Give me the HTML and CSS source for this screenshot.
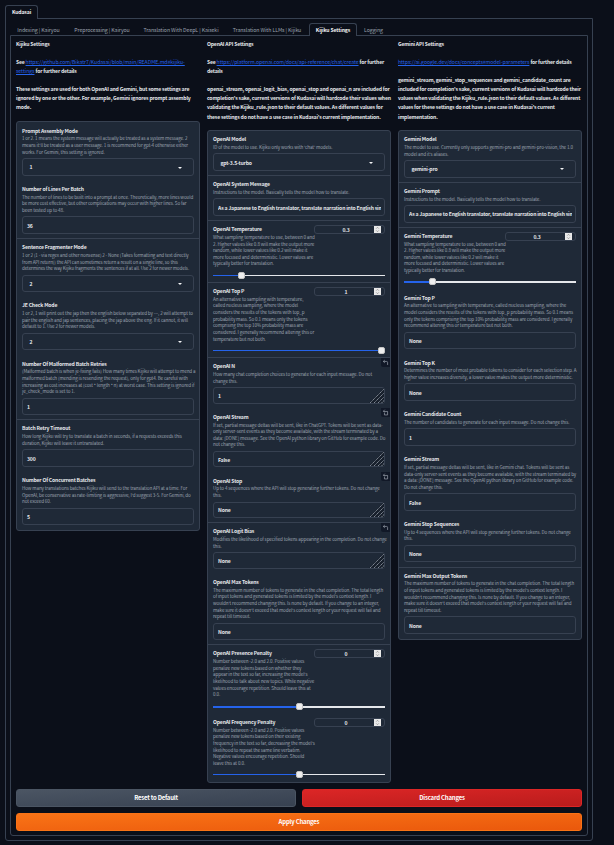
FILE: index.html
```html
<!DOCTYPE html>
<html lang="en">
<head>
<meta charset="utf-8">
<title>Kudasai</title>
<link rel="stylesheet" href="styles.css">
</head>
<body>
<svg width="0" height="0" class="defs">
  <symbol id="undo" viewBox="0 0 10 10"><path d="M4 1.5 1.8 3.5 4 5.5M2 3.5h4.500q1.500 0 1.500 1.500v3.500" fill="none" stroke="currentColor" stroke-width="1"/></symbol>
  <symbol id="undo-box" viewBox="0 0 10 10"><path d="M4 1 2 3 4 5M2 3.500h6v5h-4.500v-3" fill="none" stroke="currentColor" stroke-width="1"/></symbol>
  <symbol id="grip" viewBox="0 0 15 15"><path d="M0 15 15 0V15Z" fill="#18202c"/><path d="M1 15 15 1M5 15 15 5M9 15 15 9M12.500 15 15 12.500" fill="none" stroke="currentColor" stroke-width=".8" stroke-dasharray="1.600 .4"/></symbol>
  <symbol id="spin" viewBox="0 0 7 8"><path d="M2 3 3.500 1.500 5 3M2 5 3.500 6.500 5 5" fill="none" stroke="#777" stroke-width=".7"/></symbol>
</svg>
<nav class="top-tabs"><span class="tab active">Kudasai</span></nav>
<main class="outer">
  <nav class="tabs">
    <span class="tab t1">Indexing | Kairyou</span>
    <span class="tab t2">Preprocessing | Kairyou</span>
    <span class="tab t3">Translation With DeepL | Kaiseki</span>
    <span class="tab t4">Translation With LLMs | Kijiku</span>
    <span class="tab active t5">Kijiku Settings</span>
    <span class="tab t6">Logging</span>
  </nav>
  <section class="inner">
    <div class="columns">
      <div class="col">
        <div class="intro short">Kijiku Settings<br><br>See <a>https://github.com/Bikatr7/Kudasai/blob/main/README.md#kijiku-<br>settings</a> for further details<br><br>These settings are used for both OpenAI and Gemini, but some settings are<br>ignored by one or the other. For example, Gemini ignores prompt assembly<br>mode.</div>
        <div class="panel">
          <div class="field"><label>Prompt Assembly Mode</label><p>1 or 2. 1 means the system message will actually be treated as a system message. 2<br>means it'll be treated as a user message. 1 is recommend for gpt-4 otherwise either<br>works. For Gemini, this setting is ignored.</p><div class="box select">1</div></div>
          <div class="field"><label>Number of Lines Per Batch</label><p>The number of lines to be built into a prompt at once. Theoretically, more lines would<br>be more cost effective, but other complications may occur with higher lines. So far<br>been tested up to 48.</p><div class="box">36</div></div>
          <div class="field ruled"><label>Sentence Fragmenter Mode</label><p>1 or 2 (1 - via regex and other nonsense) 2 - None (Takes formatting and text directly<br>from API return)) the API can sometimes return a result on a single line, so this<br>determines the way Kijiku fragments the sentences if at all. Use 2 for newer models.</p><div class="box select">2</div></div>
          <div class="field"><label>JE Check Mode</label><p>1 or 2, 1 will print out the jap then the english below separated by ---, 2 will attempt to<br>pair the english and jap sentences, placing the jap above the eng. If it cannot, it will<br>default to 1. Use 2 for newer models.</p><div class="box select">2</div></div>
          <div class="field"><label>Number Of Malformed Batch Retries</label><p>(Malformed batch is when je-fixing fails) How many times Kijiku will attempt to mend a<br>malformed batch (mending is resending the request), only for gpt4. Be careful with<br>increasing as cost increases at (cost * length * n) at worst case. This setting is ignored if<br>je_check_mode is set to 1.</p><div class="box">1</div></div>
          <div class="field ruled"><label>Batch Retry Timeout</label><p>How long Kijiku will try to translate a batch in seconds, if a requests exceeds this<br>duration, Kijiku will leave it untranslated.</p><div class="box">300</div></div>
          <div class="field"><label>Number Of Concurrent Batches</label><p>How many translations batches Kijiku will send to the translation API at a time. For<br>OpenAI, be conservative as rate-limiting is aggressive, I'd suggest 3-5. For Gemini, do<br>not exceed 60.</p><div class="box">5</div></div>
        </div>
      </div>
      <div class="col">
        <div class="intro">OpenAI API Settings<br><br>See <a>https://platform.openai.com/docs/api-reference/chat/create</a> for further<br>details<br><br>openai_stream, openai_logit_bias, openai_stop and openai_n are included for<br>completion's sake, current versions of Kudasai will hardcode their values when<br>validating the Kijiku_rule.json to their default values. As different values for<br><span class="last">these settings do not have a use case in Kudasai's current implementation.</span></div>
        <div class="panel">
          <div class="field"><label>OpenAI Model</label><p>ID of the model to use. Kijiku only works with 'chat' models.</p><div class="box select">gpt-3.5-turbo</div></div>
          <div class="field ruled"><label>OpenAI System Message</label><p>Instructions to the model. Basically tells the model how to translate.</p><div class="box"><span class="clip">As a Japanese to English translator, translate narration into English sim</span></div></div>
          <div class="field ruled range"><div class="num">0.3<svg><use href="#spin"/></svg></div><label>OpenAI Temperature</label><p>What sampling temperature to use, between 0 and<br>2. Higher values like 0.8 will make the output more<br>random, while lower values like 0.2 will make it<br>more focused and deterministic. Lower values are<br>typically better for translation.</p><div class="slider p15"><i></i></div></div>
          <div class="field ruled range"><div class="num">1<svg><use href="#spin"/></svg></div><label>OpenAI Top P</label><p>An alternative to sampling with temperature,<br>called nucleus sampling, where the model<br>considers the results of the tokens with top_p<br>probability mass. So 0.1 means only the tokens<br>comprising the top 10% probability mass are<br>considered. I generally recommend altering this or<br>temperature but not both.</p><div class="slider p100"><i></i></div></div>
          <div class="field ruled area"><svg class="reset"><use href="#undo"/></svg><label>OpenAI N</label><p>How many chat completion choices to generate for each input message. Do not<br>change this.</p><div class="box">1<svg class="grip"><use href="#grip"/></svg></div></div>
          <div class="field area"><svg class="reset"><use href="#undo-box"/></svg><label>OpenAI Stream</label><p>If set, partial message deltas will be sent, like in ChatGPT. Tokens will be sent as data-<br>only server-sent events as they become available, with the stream terminated by a<br>data: [DONE] message. See the OpenAI python library on GitHub for example code. Do<br>not change this.</p><div class="box">False<svg class="grip"><use href="#grip"/></svg></div></div>
          <div class="field area"><svg class="reset"><use href="#undo-box"/></svg><label>OpenAI Stop</label><p>Up to 4 sequences where the API will stop generating further tokens. Do not change<br>this.</p><div class="box">None<svg class="grip"><use href="#grip"/></svg></div></div>
          <div class="field ruled area"><svg class="reset"><use href="#undo"/></svg><label>OpenAI Logit Bias</label><p>Modifies the likelihood of specified tokens appearing in the completion. Do not change<br>this.</p><div class="box">None<svg class="grip"><use href="#grip"/></svg></div></div>
          <div class="field"><label>OpenAI Max Tokens</label><p>The maximum number of tokens to generate in the chat completion. The total length<br>of input tokens and generated tokens is limited by the model's context length. I<br>wouldn't recommend changing this. Is none by default. If you change to an integer,<br>make sure it doesn't exceed that model's context length or your request will fail and<br>repeat till timeout.</p><div class="box">None</div></div>
          <div class="field ruled range"><div class="num">0<svg><use href="#spin"/></svg></div><label>OpenAI Presence Penalty</label><p>Number between -2.0 and 2.0. Positive values<br>penalize new tokens based on whether they<br>appear in the text so far, increasing the model's<br>likelihood to talk about new topics. While negative<br>values encourage repetition. Should leave this at<br>0.0.</p><div class="slider p50 thick"><i></i></div></div>
          <div class="field range"><div class="num">0<svg><use href="#spin"/></svg></div><label>OpenAI Frequency Penalty</label><p>Number between -2.0 and 2.0. Positive values<br>penalize new tokens based on their existing<br>frequency in the text so far, decreasing the model's<br>likelihood to repeat the same line verbatim.<br>Negative values encourage repetition. Should<br>leave this at 0.0.</p><div class="slider p50"><i></i></div></div>
        </div>
      </div>
      <div class="col">
        <div class="intro">Gemini API Settings<br><br><a>https://ai.google.dev/docs/concepts#model-parameters</a> for further details<br><br>gemini_stream, gemini_stop_sequences and gemini_candidate_count are<br>included for completion's sake, current versions of Kudasai will hardcode their<br>values when validating the Kijiku_rule.json to their default values. As different<br>values for these settings do not have a use case in Kudasai's current<br><span class="last">implementation.</span></div>
        <div class="panel">
          <div class="field"><label>Gemini Model</label><p>The model to use. Currently only supports gemini-pro and gemini-pro-vision, the 1.0<br>model and it's aliases.</p><div class="box select">gemini-pro</div></div>
          <div class="field ruled"><label>Gemini Prompt</label><p>Instructions to the model. Basically tells the model how to translate.</p><div class="box"><span class="clip">As a Japanese to English translator, translate narration into English sim</span></div></div>
          <div class="field ruled range"><div class="num">0.3<svg><use href="#spin"/></svg></div><label>Gemini Temperature</label><p>What sampling temperature to use, between 0 and<br>2. Higher values like 0.8 will make the output more<br>random, while lower values like 0.2 will make it<br>more focused and deterministic. Lower values are<br>typically better for translation.</p><div class="slider p15 thick"><i></i></div></div>
          <div class="field"><label>Gemini Top P</label><p>An alternative to sampling with temperature, called nucleus sampling, where the<br>model considers the results of the tokens with top_p probability mass. So 0.1 means<br>only the tokens comprising the top 10% probability mass are considered. I generally<br>recommend altering this or temperature but not both.</p><div class="box">None</div></div>
          <div class="field"><label>Gemini Top K</label><p>Determines the number of most probable tokens to consider for each selection step. A<br>higher value increases diversity, a lower value makes the output more deterministic.</p><div class="box">None</div></div>
          <div class="field"><label>Gemini Candidate Count</label><p>The number of candidates to generate for each input message. Do not change this.</p><div class="box">1</div></div>
          <div class="field"><label>Gemini Stream</label><p>If set, partial message deltas will be sent, like in Gemini chat. Tokens will be sent as<br>data-only server-sent events as they become available, with the stream terminated by<br>a data: [DONE] message. See the OpenAI python library on GitHub for example code.<br>Do not change this.</p><div class="box">False</div></div>
          <div class="field"><label>Gemini Stop Sequences</label><p>Up to 4 sequences where the API will stop generating further tokens. Do not change<br>this.</p><div class="box">None</div></div>
          <div class="field ruled"><label>Gemini Max Output Tokens</label><p>The maximum number of tokens to generate in the chat completion. The total length<br>of input tokens and generated tokens is limited by the model's context length. I<br>wouldn't recommend changing this. Is none by default. If you change to an integer,<br>make sure it doesn't exceed that model's context length or your request will fail and<br>repeat till timeout.</p><div class="box">None</div></div>
        </div>
      </div>
    </div>
    <div class="actions">
      <button class="secondary">Reset to Default</button>
      <button class="stop">Discard Changes</button>
      <button class="primary">Apply Changes</button>
    </div>
  </section>
</main>
</body>
</html>
```
FILE: styles.css
```css
* { box-sizing: border-box; }
html, body { margin: 0; }
body {
  width: 614px;
  height: 845px;
  overflow: hidden;
  padding: 5px 0 0 5px;
  background: #0b0f19;
  color: #e5e7eb;
  font-family: "Noto Sans CJK JP", "Noto Sans", sans-serif;
  font-size: 5.1px;
  letter-spacing: -.17px;
  white-space: nowrap;
}
.defs { position: absolute; }
.top-tabs { display: flex; height: 13px; }
.top-tabs .tab { width: 33px; height: 14px; }
.tab {
  display: flex;
  align-items: center;
  justify-content: center;
  color: #9ca3af;
  font-size: 5.2px;
  letter-spacing: -.06px;
  border: 1px solid transparent;
  border-bottom: 0;
  padding-bottom: 2px;
}
.tab.active {
  z-index: 1;
  border-color: #374151;
  border-radius: 3px 3px 0 0;
  background: #0b0f19;
  color: #f3f4f6;
  font-weight: 700;
  font-size: 5.1px;
  letter-spacing: -.12px;
}
.outer {
  width: 588px;
  height: 823px;
  border: 1px solid #374151;
  border-radius: 0 0 3px 3px;
  padding: 4px;
}
.tabs { display: flex; height: 12px; }
.tabs .tab { height: 13px; }
.t1 { width: 57px; }
.t2 { width: 70px; }
.t3 { width: 88px; }
.t4 { width: 84px; }
.t5 { width: 48px; }
.t6 { width: 33px; }
.inner {
  width: 578px;
  height: 801px;
  border: 1px solid #374151;
  border-radius: 0 0 3px 3px;
  padding: 3px 5px 0;
}
.columns { display: grid; grid-template-columns: repeat(3, 184px); column-gap: 7px; height: 750px; }
.intro { height: 90.500px; line-height: 9px; font-weight: 700; }
.intro.short { height: 82px; }
.intro .last { position: relative; top: 1px; }
.intro a { color: #2563eb; font-weight: 400; letter-spacing: -.02px; text-decoration: underline; text-decoration-thickness: 1px; text-underline-offset: 1px; }
.panel { border: 1px solid #374151; border-radius: 3px; background: #1f2937; overflow: hidden; }
.field { position: relative; padding: 4.600px 5px; }
.field.ruled::before { content: ""; position: absolute; left: 0; right: 0; top: -.5px; height: 1px; background: #374151; }
label { display: block; height: 8.800px; line-height: 7.500px; font-weight: 700; }
p { margin: 0; line-height: 6.630px; font-size: 4.550px; letter-spacing: -.1px; color: #9ca3af; }
.box {
  position: relative;
  display: flex;
  align-items: center;
  height: 17.600px;
  margin-top: 2.800px;
  padding-left: 4px;
  border: 1px solid #374151;
  border-radius: 3px;
  font-weight: 700;
}
.box .clip { width: 163px; overflow: hidden; }
.box.select { padding-left: 6.500px; }
.select::after { content: ""; position: absolute; right: 11px; top: 7.500px; border: 2px solid transparent; border-top-color: #f3f4f6; border-bottom: 0; }
.area .box { height: 16.600px; }
.grip { position: absolute; right: 0; bottom: 0; width: 15px; height: 15px; color: #9ca3af; }
.reset { position: absolute; right: 0; top: 0; width: 9px; height: 9px; padding: 1px; background: #111827; color: #9ca3af; border-radius: 0 0 0 2px; }
.num {
  position: absolute;
  right: 5px;
  top: 4.500px;
  width: 71px;
  height: 9px;
  line-height: 7px;
  padding-right: 7px;
  border: 1px solid #374151;
  border-radius: 3px;
  text-align: center;
  font-weight: 700;
}
.num svg { position: absolute; right: 3px; top: 0; width: 7px; height: 7px; background: #e8e8e8; }
.slider { position: relative; height: 1px; margin: 7.800px 0 2px; background: #e5e7eb; }
.slider::before { content: ""; position: absolute; left: 0; top: 0; height: 100%; background: #2563eb; }
.slider i { position: absolute; top: -3px; width: 7px; height: 7px; border-radius: 2px; background: #eee; border: 1px solid #c4c4c4; }
.slider.thick { height: 2px; margin-bottom: 1px; }
.p15::before { width: 16%; }
.p15 i { left: 25px; }
.p50::before { width: 50%; }
.p50 i { left: 83px; }
.p100::before { width: 100%; }
.p100 i { left: 165px; }
.actions { display: grid; grid-template-columns: 280px 280px; gap: 6px; }
button { height: 18px; border: 1px solid #4b5563; border-radius: 3px; padding: 0 0 1px; color: #fff; font: 700 6px "Noto Sans CJK JP", sans-serif; letter-spacing: -.2px; }
.secondary { background: linear-gradient(to bottom right, #4b5563, #374151); }
.stop { background: linear-gradient(to bottom right, #dc2626, #b91c1c); border-color: #dc2626; }
.primary { grid-column: span 2; background: linear-gradient(to bottom right, #f97316, #ea580c); border-color: #f97316; }
```
